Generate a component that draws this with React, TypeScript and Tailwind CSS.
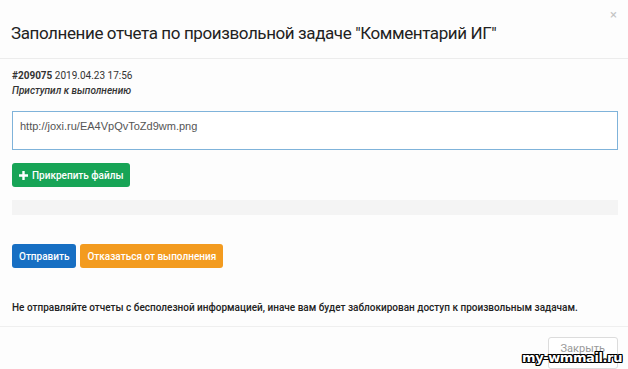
export default function App() {
  return (
    <div
      className="relative h-[369px] w-[628px] overflow-hidden bg-[#fdfdfd] text-[#333]"
      style={{ fontFamily: "Roboto, 'Liberation Sans', sans-serif" }}
    >
      {/* header */}
      <div className="relative h-[59px] border-b border-[#ececec] px-[11px] pt-[21px]">
        <h1 className="text-[17px] leading-[24px] tracking-[-0.4px] text-[#222]">
          Заполнение отчета по произвольной задаче "Комментарий ИГ"
        </h1>
        <span className="absolute right-[11px] top-[5px] text-[13px] text-[#c4c4c4]">×</span>
      </div>

      {/* body */}
      <div className="px-[12px] pt-[9px]">
        <p className="text-[10px] leading-[15px]">
          <b className="font-bold">#209075</b> 2019.04.23 17:56
        </p>
        <p className="text-[10px] font-medium italic leading-[15px]">Приступил к выполнению</p>

        <div
          className="mt-[13px] h-[39px] w-[606px] border border-[#7fb3da] bg-white px-[7px] pt-[6px] text-[11px] text-[#555]"
          style={{ fontFamily: "'Liberation Sans', Arial, sans-serif" }}
        >
          http://joxi.ru/EA4VpQvToZd9wm.png
        </div>

        <button className="mt-[13px] flex h-[24px] items-center gap-[4px] rounded-[3px] bg-[#17a456] px-[7px] text-[10px] font-medium text-white">
          <svg width="9" height="9" viewBox="0 0 9 9">
            <path d="M3.3 0h2.4v3.3H9v2.4H5.7V9H3.3V5.7H0V3.3h3.3z" fill="#fff" />
          </svg>
          Прикрепить файлы
        </button>

        <div className="mt-[13px] h-[15px] w-[606px] bg-[#f4f4f4]" />

        <div className="mt-[29px] flex gap-[4px]">
          <button className="h-[24px] rounded-[3px] bg-[#176fc3] px-[7px] text-[10px] font-medium text-white">
            Отправить
          </button>
          <button className="h-[24px] rounded-[3px] bg-[#f39b1f] px-[7px] text-[10px] font-medium text-white">
            Отказаться от выполнения
          </button>
        </div>

        <p className="mt-[32px] text-[10px] font-medium leading-[15px] text-[#222]">
          Не отправляйте отчеты с бесполезной информацией, иначе вам будет заблокирован доступ к произвольным задачам.
        </p>
      </div>

      {/* footer */}
      <div className="mt-[11px] flex justify-end border-t border-[#efefef] px-[10px] pt-[10px]">
        <button className="h-[32px] self-start rounded-[3px] border border-[#dcdcdc] bg-white px-[12px] pb-[8px] text-[11px] leading-[14px] text-[#999]">
          Закрыть
        </button>
      </div>

      {/* watermark */}
      <span
        className="absolute bottom-[3px] right-[6px] text-[13px] font-bold leading-[16px] tracking-[-0.4px] text-white"
        style={{
          fontFamily: "'DejaVu Sans', sans-serif",
          textShadow:
            "1px 0 #000, -1px 0 #000, 0 1px #000, 0 -1px #000, 1px 1px #000, -1px -1px #000, 1px -1px #000, -1px 1px #000",
        }}
      >
        my-wmmail.ru
      </span>
    </div>
  );
}
